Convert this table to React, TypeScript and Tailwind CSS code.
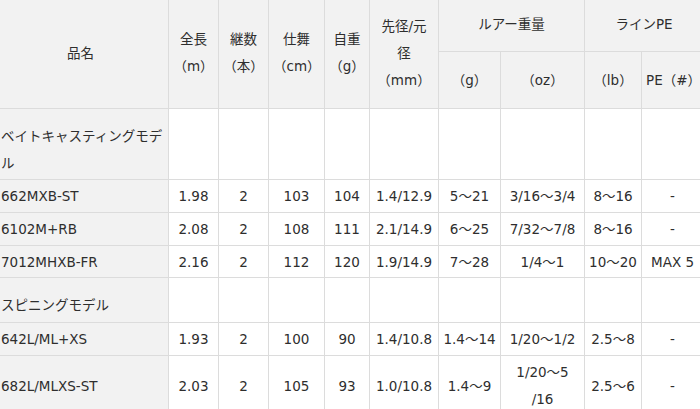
import React from 'react';

type Row = {
  name: string;
  len: string;
  pcs: string;
  closed: string;
  weight: string;
  dia: string;
  lureG: string;
  lureOz: React.ReactNode;
  lb: string;
  pe: string;
};

const baitRows: Row[] = [
  { name: '662MXB-ST', len: '1.98', pcs: '2', closed: '103', weight: '104', dia: '1.4/12.9', lureG: '5～21', lureOz: '3/16～3/4', lb: '8～16', pe: '-' },
  { name: '6102M+RB', len: '2.08', pcs: '2', closed: '108', weight: '111', dia: '2.1/14.9', lureG: '6～25', lureOz: '7/32～7/8', lb: '8～16', pe: '-' },
  { name: '7012MHXB-FR', len: '2.16', pcs: '2', closed: '112', weight: '120', dia: '1.9/14.9', lureG: '7～28', lureOz: '1/4～1', lb: '10～20', pe: 'MAX 5' },
];

const spinRows: Row[] = [
  { name: '642L/ML+XS', len: '1.93', pcs: '2', closed: '100', weight: '90', dia: '1.4/10.8', lureG: '1.4～14', lureOz: '1/20～1/2', lb: '2.5～8', pe: '-' },
  {
    name: '682L/MLXS-ST', len: '2.03', pcs: '2', closed: '105', weight: '93', dia: '1.0/10.8', lureG: '1.4～9',
    lureOz: (<span className="leading-[27px]">1/20～5<br />/16</span>), lb: '2.5～6', pe: '-',
  },
];

const th = 'border border-[#dcdcdc] bg-[#f2f2f2] font-normal text-center align-middle px-1 leading-[27px]';
const td = 'border border-[#dcdcdc] text-center align-middle px-0 pt-[3px] pb-[2.75px] leading-[26px] whitespace-nowrap';
const nameCell = 'border border-[#dcdcdc] bg-[#f2f2f2] text-left align-middle pl-[8px] pr-1 pt-[3px] pb-[2.75px] leading-[26px] whitespace-nowrap';

const DataRow: React.FC<{ row: Row }> = ({ row }) => (
  <tr>
    <td className={nameCell}>{row.name}</td>
    <td className={td}>{row.len}</td>
    <td className={td}>{row.pcs}</td>
    <td className={td}>{row.closed}</td>
    <td className={td}>{row.weight}</td>
    <td className={td}>{row.dia}</td>
    <td className={td}>{row.lureG}</td>
    <td className={td}>{row.lureOz}</td>
    <td className={td}>{row.lb}</td>
    <td className={td}>{row.pe}</td>
  </tr>
);

const SectionRow: React.FC<{ children: React.ReactNode; pad: string }> = ({ children, pad }) => (
  <tr>
    <td className={`border border-[#dcdcdc] bg-[#f2f2f2] text-left pl-[8px] leading-[27px] whitespace-nowrap ${pad}`}>
      {children}
    </td>
    {Array.from({ length: 9 }).map((_, i) => (
      <td key={i} className="border border-[#dcdcdc]" />
    ))}
  </tr>
);

export default function App() {
  return (
    <div
      className="w-[700px] h-[409px] overflow-hidden bg-white text-[#2e2e2e] text-[13.5px]"
      style={{ fontFamily: '"DejaVu Sans", "Noto Sans CJK JP", sans-serif' }}
    >
      <table className="table-fixed border-collapse w-[711px] -ml-[8px] -mt-[3px]">
        <colgroup>
          <col className="w-[176px]" />
          <col className="w-[50px]" />
          <col className="w-[50px]" />
          <col className="w-[56px]" />
          <col className="w-[45px]" />
          <col className="w-[69px]" />
          <col className="w-[62px]" />
          <col className="w-[84px]" />
          <col className="w-[57px]" />
          <col className="w-[62px]" />
        </colgroup>
        <thead>
          <tr className="h-[54px]">
            <th rowSpan={2} className={th}>品名</th>
            <th rowSpan={2} className={th}>全長<br />（m）</th>
            <th rowSpan={2} className={th}>継数<br />（本）</th>
            <th rowSpan={2} className={th}>仕舞<br />（cm）</th>
            <th rowSpan={2} className={th}>自重<br />（g）</th>
            <th rowSpan={2} className={th}>先径/元<br />径<br />（mm）</th>
            <th colSpan={2} className={th}>ルアー重量</th>
            <th colSpan={2} className={th}>ラインPE</th>
          </tr>
          <tr className="h-[57px]">
            <th className={th}>（g）</th>
            <th className={th}>（oz）</th>
            <th className={th}>（lb）</th>
            <th className={`${th} whitespace-nowrap px-0`}>PE（#）</th>
          </tr>
        </thead>
        <tbody>
          <SectionRow pad="pt-[14px] pb-[2px]">ベイトキャスティングモデ<br />ル</SectionRow>
          {baitRows.map(r => <DataRow key={r.name} row={r} />)}
          <SectionRow pad="pt-[14px] pb-[3px]">スピニングモデル</SectionRow>
          {spinRows.map(r => <DataRow key={r.name} row={r} />)}
        </tbody>
      </table>
    </div>
  );
}
